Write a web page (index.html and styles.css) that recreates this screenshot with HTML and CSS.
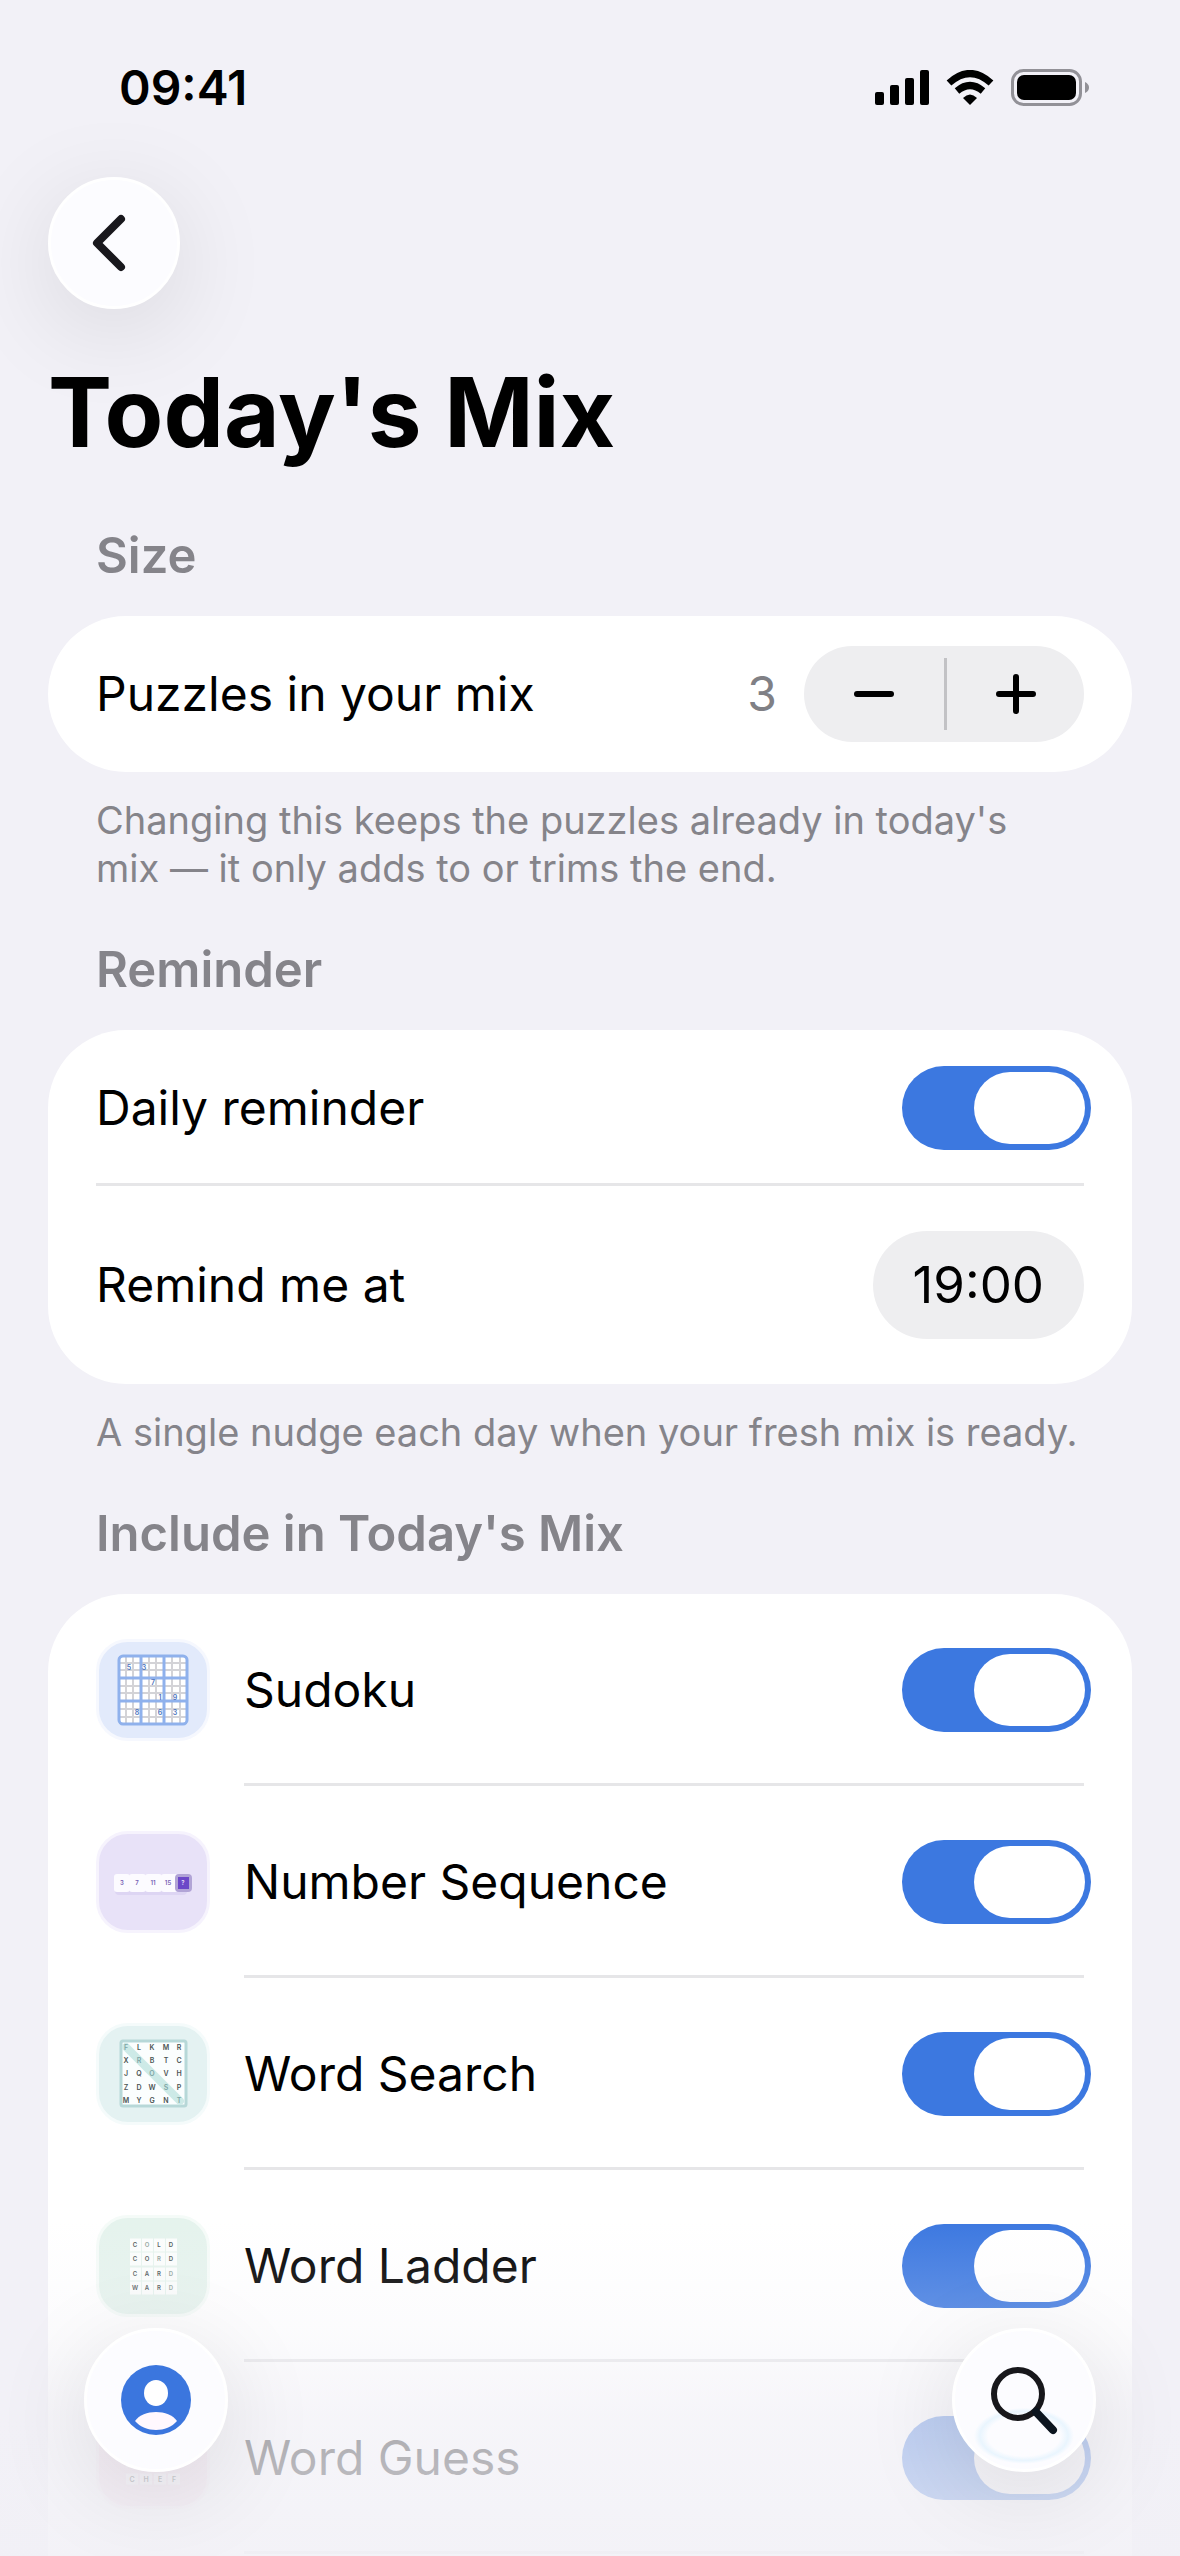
FILE: index.html
```html
<!DOCTYPE html>
<html lang="en">
<head>
    <meta charset="UTF-8">
    <meta name="viewport" content="width=device-width, initial-scale=1.0">
    <title>Today's Mix</title>
    <link rel="stylesheet" href="styles.css">
</head>
<body>
    <div class="screen">
        <header class="status-bar">
            <span class="clock">09:41</span>
            <div class="status-icons">
                <svg width="54" height="36" viewBox="0 0 54 36" aria-hidden="true">
                    <rect x="0" y="22" width="9" height="13" rx="2"/>
                    <rect x="15" y="15" width="9" height="20" rx="2"/>
                    <rect x="30" y="8" width="9" height="27" rx="2"/>
                    <rect x="45" y="0" width="9" height="35" rx="2"/>
                </svg>
                <svg width="48" height="36" viewBox="0 0 48 36" aria-hidden="true">
                    <path d="M3 13 Q24 -6 45 13" fill="none" stroke="#000" stroke-width="7"/>
                    <path d="M11 21 Q24 10 37 21" fill="none" stroke="#000" stroke-width="7"/>
                    <path d="M17 28 Q24 21 31 28 L24 35 Z"/>
                </svg>
                <svg width="79" height="38" viewBox="0 0 79 38" aria-hidden="true">
                    <rect x="1.5" y="1.5" width="68" height="34" rx="11" fill="none" stroke="#929197" stroke-width="3"/>
                    <rect x="6" y="6" width="59" height="25" rx="7"/>
                    <path d="M74 13 Q78 15 78 18.500 Q78 22 74 24 Z" fill="#929197"/>
                </svg>
            </div>
        </header>

        <main class="content">
            <button class="round-button back" aria-label="Back">
                <svg width="40" height="62" viewBox="0 0 40 62" aria-hidden="true">
                    <path d="M31 7 L7 31 L31 55" fill="none" stroke="#19181d" stroke-width="8" stroke-linecap="round" stroke-linejoin="round"/>
                </svg>
            </button>
            <h1>Today's Mix</h1>

            <h2>Size</h2>
            <section class="card">
                <div class="row">
                    <span class="label" id="sizeLabel">Puzzles in your mix</span>
                    <output class="count">3</output>
                    <div class="stepper" role="group" aria-labelledby="sizeLabel">
                        <button aria-label="Decrease">
                            <svg width="40" height="40" viewBox="0 0 40 40" aria-hidden="true"><path d="M3 20H37"/></svg>
                        </button>
                        <button aria-label="Increase">
                            <svg width="40" height="40" viewBox="0 0 40 40" aria-hidden="true"><path d="M3 20H37M20 3V37"/></svg>
                        </button>
                    </div>
                </div>
            </section>
            <p class="note">Changing this keeps the puzzles already in today's<br>mix — it only adds to or trims the end.</p>

            <h2>Reminder</h2>
            <section class="card">
                <div class="row line">
                    <label class="label" for="daily">Daily reminder</label>
                    <input class="switch" type="checkbox" role="switch" id="daily" checked>
                </div>
                <div class="row tall">
                    <span class="label" id="remindLabel">Remind me at</span>
                    <button class="time" aria-describedby="remindLabel">19:00</button>
                </div>
            </section>
            <p class="note">A single nudge each day when your fresh mix is ready.</p>

            <h2>Include in Today's Mix</h2>
            <section class="card games">
                <div class="game">
                    <svg class="tile blue" viewBox="0 0 108 96" aria-hidden="true">
                        <rect x="19" y="13" width="70" height="70" rx="4" fill="#fff"/>
                        <path d="M27 13V83M34 13V83M50 13V83M57 13V83M73 13V83M81 13V83M19 21H89M19 28H89M19 44H89M19 51H89M19 67H89M19 75H89" stroke="#d3d3d7" stroke-width="2"/>
                        <path d="M42 13V83M65 13V83M19 36H89M19 59H89" stroke="#8fb1ec" stroke-width="3"/>
                        <rect x="20" y="14" width="68" height="68" rx="4" fill="none" stroke="#8fb1ec" stroke-width="3"/>
                        <g class="digits">
                            <text x="30" y="28">5</text><text x="45" y="28">3</text><text x="54" y="43">7</text>
                            <text x="61" y="58">1</text><text x="76" y="58">9</text>
                            <text x="38" y="73">8</text><text x="61" y="73">6</text><text x="76" y="73">3</text>
                        </g>
                    </svg>
                    <div class="row line">
                        <label class="label" for="sudoku">Sudoku</label>
                        <input class="switch" type="checkbox" role="switch" id="sudoku" checked>
                    </div>
                </div>
                <div class="game">
                    <svg class="tile purple" viewBox="0 0 108 96" aria-hidden="true">
                        <rect x="16" y="43" width="72" height="18" rx="4" fill="#ddd5f3"/>
                        <g fill="#fcfbff">
                            <rect x="15" y="40" width="16" height="18" rx="3"/>
                            <rect x="30" y="40" width="17" height="18" rx="3"/>
                            <rect x="46" y="40" width="17" height="18" rx="3"/>
                            <rect x="62" y="40" width="17" height="18" rx="3"/>
                        </g>
                        <rect x="76" y="40" width="17" height="18" rx="4" fill="#b1a4d6"/>
                        <rect x="79" y="43" width="11" height="12" fill="#6c48c8"/>
                        <g class="terms">
                            <text x="23" y="51">3</text><text x="38" y="51">7</text><text x="54" y="51">11</text>
                            <text x="69" y="51">15</text><text x="84" y="51" class="unknown">?</text>
                        </g>
                    </svg>
                    <div class="row line">
                        <label class="label" for="sequence">Number Sequence</label>
                        <input class="switch" type="checkbox" role="switch" id="sequence" checked>
                    </div>
                </div>
                <div class="game">
                    <svg class="tile teal" viewBox="0 0 108 96" aria-hidden="true">
                        <rect x="22" y="15" width="65" height="65" rx="2" fill="#fbfefe" stroke="#b7d8d8" stroke-width="3"/>
                        <path d="M27 21L81 75" stroke="#cdeae7" stroke-width="8" stroke-linecap="round"/>
                        <g class="letters">
                            <text x="27" y="24" class="found">F</text><text x="40" y="24">L</text><text x="53" y="24">K</text><text x="67" y="24">M</text><text x="80" y="24">R</text>
                            <text x="27" y="37">X</text><text x="40" y="37" class="found">R</text><text x="53" y="37">B</text><text x="67" y="37">T</text><text x="80" y="37">C</text>
                            <text x="27" y="50">J</text><text x="40" y="50">Q</text><text x="53" y="50" class="found">O</text><text x="67" y="50">V</text><text x="80" y="50">H</text>
                            <text x="27" y="64">Z</text><text x="40" y="64">D</text><text x="53" y="64">W</text><text x="67" y="64" class="found">S</text><text x="80" y="64">P</text>
                            <text x="27" y="77">M</text><text x="40" y="77">Y</text><text x="53" y="77">G</text><text x="67" y="77">N</text><text x="80" y="77" class="found">T</text>
                        </g>
                    </svg>
                    <div class="row line">
                        <label class="label" for="search">Word Search</label>
                        <input class="switch" type="checkbox" role="switch" id="search" checked>
                    </div>
                </div>
                <div class="game">
                    <svg class="tile green" viewBox="0 0 108 96" aria-hidden="true">
                        <g stroke="#fbfdfc" stroke-width="13" stroke-dasharray="11 1">
                            <path d="M31 27H78M31 41H78M31 56H78M31 70H78"/>
                        </g>
                        <g class="letters small">
                            <text x="36" y="29">C</text><text x="48" y="29" class="changed">O</text><text x="60" y="29">L</text><text x="72" y="29">D</text>
                            <text x="36" y="43">C</text><text x="48" y="43">O</text><text x="60" y="43" class="changed">R</text><text x="72" y="43">D</text>
                            <text x="36" y="58">C</text><text x="48" y="58">A</text><text x="60" y="58">R</text><text x="72" y="58" class="changed">D</text>
                            <text x="36" y="72">W</text><text x="48" y="72">A</text><text x="60" y="72">R</text><text x="72" y="72" class="changed">D</text>
                        </g>
                    </svg>
                    <div class="row line">
                        <label class="label" for="ladder">Word Ladder</label>
                        <input class="switch" type="checkbox" role="switch" id="ladder" checked>
                    </div>
                </div>
                <div class="game">
                    <svg class="tile pink" viewBox="0 0 108 96" aria-hidden="true">
                        <g stroke="#fffbfd" stroke-width="11" stroke-dasharray="12 2">
                            <path d="M27 23H82M27 37H82M27 52H82M27 69H82"/>
                        </g>
                        <g class="letters">
                            <text x="33" y="72">C</text><text x="47" y="72">H</text><text x="61" y="72">E</text><text x="75" y="72">F</text>
                        </g>
                    </svg>
                    <div class="row line">
                        <label class="label" for="guess">Word Guess</label>
                        <input class="switch" type="checkbox" role="switch" id="guess" checked>
                    </div>
                </div>
            </section>
        </main>

        <nav class="bottom-bar">
            <button class="round-button large" aria-label="Profile">
                <svg width="70" height="70" viewBox="0 0 70 70" aria-hidden="true">
                    <circle cx="35" cy="35" r="35" fill="#3b76de"/>
                    <ellipse cx="35" cy="28" rx="12" ry="13" fill="#fff"/>
                    <path d="M14 56 C22 44 48 44 56 56 C46 68 24 68 14 56 Z" fill="#fff8fe"/>
                </svg>
            </button>
            <button class="round-button large lens" aria-label="Search">
                <svg width="72" height="72" viewBox="0 0 72 72" aria-hidden="true">
                    <circle cx="30" cy="30" r="24" fill="none" stroke="#17171b" stroke-width="6"/>
                    <path d="M48 48 L65 66" stroke="#0c151f" stroke-width="8" stroke-linecap="round"/>
                </svg>
            </button>
        </nav>
    </div>
</body>
</html>
```

FILE: styles.css
```css
* {
    box-sizing: border-box;
}

body {
    margin: 0;
    background-color: #f2f1f7;
    color: #000;
    font-family: Inter, "Liberation Sans", sans-serif;
    font-size: 48px;
    line-height: 60px;
}

button {
    border: 0;
    padding: 0;
    font: inherit;
    color: inherit;
    cursor: pointer;
}

svg {
    display: block;
}

.screen {
    position: relative;
    display: flex;
    flex-direction: column;
    height: 100vh;
    overflow: hidden;
}

/* Status bar */
.status-bar {
    display: flex;
    justify-content: space-between;
    align-items: center;
    padding: 58px 90px 59px 119px;
}

.clock {
    font-size: 48px;
    font-weight: 600;
}

.status-icons {
    display: flex;
    align-items: center;
    gap: 17px;
}

/* Content */
.content {
    display: flex;
    flex-direction: column;
    flex: 1;
    padding: 0 48px;
}

.round-button {
    display: flex;
    align-items: center;
    justify-content: center;
    width: 132px;
    height: 132px;
    border: 3px solid #fff;
    border-radius: 50%;
    background-color: #fcfcff;
    box-shadow: 0 20px 100px rgba(0, 0, 0, 0.11);
}

.back {
    flex: none;
    padding-right: 8px;
}

h1 {
    margin: 43px 0 54px;
    font-size: 96px;
    font-weight: 700;
    line-height: 120px;
}

h2 {
    margin: 0 48px 30px;
    color: #85848a;
    font-size: 49px;
    font-weight: 600;
}

.card {
    padding: 0 48px;
    border-radius: 78px;
    background-color: #fff;
}

.row {
    display: flex;
    align-items: center;
    flex: 1;
    min-height: 156px;
}

.row.line {
    box-shadow: inset 0 -3px #e6e6e8;
}

.row.tall {
    min-height: 198px;
}

.label {
    flex: 1;
}

.note {
    margin: 24px 48px 48px;
    color: #85848a;
    font-size: 38px;
    line-height: 48px;
}

.count {
    margin-right: 27px;
    color: #808085;
}

/* Stepper */
.stepper {
    display: flex;
    align-items: center;
    height: 96px;
    border-radius: 48px;
    background-color: #eeeef0;
}

.stepper button {
    display: flex;
    align-items: center;
    justify-content: center;
    width: 140px;
    height: 72px;
    background: none;
}

.stepper button + button {
    border-left: 3px solid #c2c2c5;
}

.stepper path {
    stroke: #000;
    stroke-width: 6;
    stroke-linecap: round;
}

.time {
    height: 108px;
    padding: 0 40px;
    border-radius: 54px;
    background-color: #eeeef0;
    font-size: 51px;
}

/* Switch */
.switch {
    appearance: none;
    display: flex;
    width: 189px;
    height: 84px;
    margin: 0 -7px 0 0;
    padding: 6px;
    border-radius: 42px;
    background-color: #d5d5da;
    cursor: pointer;
}

.switch::before {
    content: "";
    width: 111px;
    border-radius: 36px;
    background-color: #fff;
}

.switch:checked {
    justify-content: flex-end;
    background-color: #3c78e0;
}

/* Game list */
.games {
    flex: 1;
    border-radius: 78px 78px 0 0;
}

.game {
    display: flex;
    align-items: center;
    gap: 34px;
}

.game .row {
    min-height: 192px;
}

.tile {
    width: 114px;
    height: 102px;
    border: 3px solid #f6f8fe;
    border-radius: 32px;
}

.tile text {
    font-size: 7px;
    font-weight: 600;
    text-anchor: middle;
}

.tile.blue {
    background-color: #e2eafb;
}

.tile.purple {
    background-color: #e8e2f8;
    border-color: #f6f3fd;
}

.tile.teal {
    background-color: #e4f2f2;
    border-color: #f5fbfb;
}

.tile.green {
    background-color: #e5f3ed;
    border-color: #f5fbf8;
}

.tile.pink {
    background-color: #fae5ef;
    border-color: #fdf5f9;
}

.digits {
    fill: #4d73bd;
}

.tile .terms text {
    font-size: 6px;
}

.terms {
    fill: #755fb5;
}

.terms .unknown {
    fill: #e6def8;
}

.letters {
    fill: #4c5555;
}

.tile .small text {
    font-size: 6px;
}

.letters .found {
    fill: #7fa6a5;
}

.letters .changed {
    fill: #91a39b;
}

/* Floating buttons over a fade */
.bottom-bar {
    position: absolute;
    right: 0;
    bottom: 0;
    left: 0;
    display: flex;
    justify-content: space-between;
    padding: 108px 84px 84px;
    background: linear-gradient(rgba(242, 241, 247, 0), rgba(242, 241, 247, 0.24) 32%, rgba(242, 241, 247, 0.7) 58%, rgba(241, 240, 246, 0.86));
}

.large {
    width: 144px;
    height: 144px;
}

.lens {
    background-image: radial-gradient(ellipse 50px 28px at 50% 76%, #fcfcff 72%, #e9f5fe 88%, rgba(252, 252, 255, 0) 100%);
}
```
